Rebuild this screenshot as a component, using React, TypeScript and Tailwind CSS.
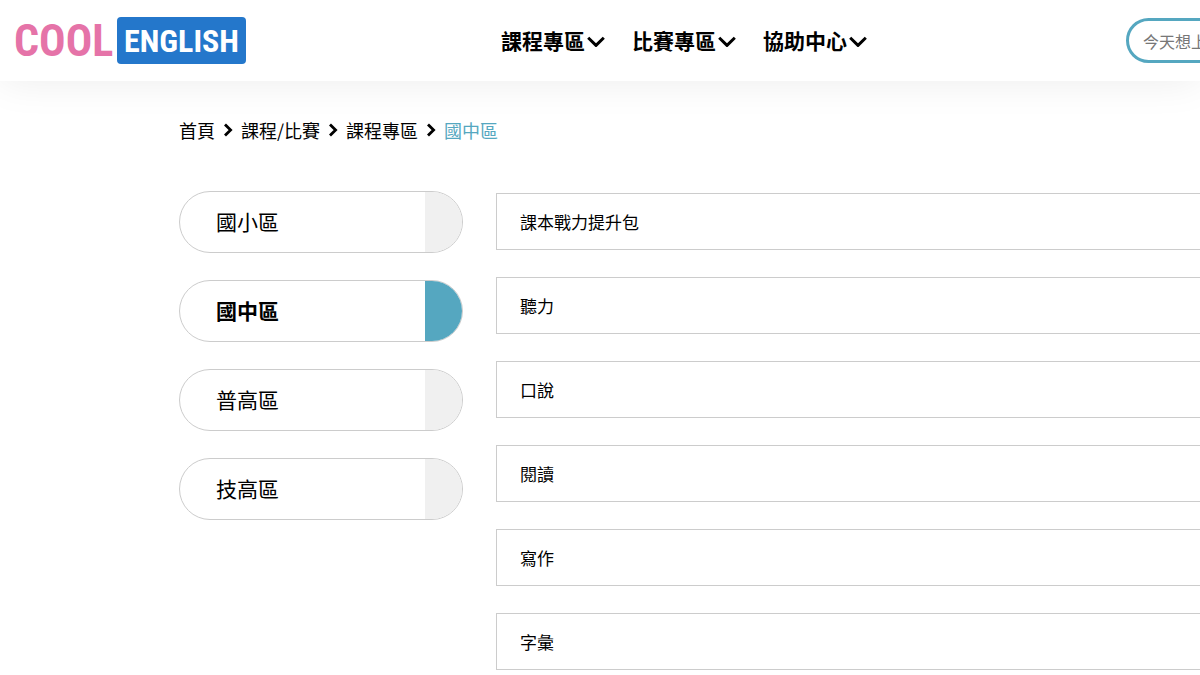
import { useState } from "react";

const NAV_ITEMS = ["課程專區", "比賽專區", "協助中心"];

const BREADCRUMBS = ["首頁", "課程/比賽", "課程專區"];

const STAGES = ["國小區", "國中區", "普高區", "技高區"];

const COURSES = ["課本戰力提升包", "聽力", "口說", "閱讀", "寫作", "字彙"];

const Logo = () => (
  <a
    href="#"
    aria-label="COOL ENGLISH"
    className="flex shrink-0 items-center gap-1 font-['Roboto_Condensed','Liberation_Sans_Narrow','Liberation_Sans',sans-serif] font-bold leading-none"
  >
    <span className="w-[99px] text-center text-[44px] text-[#e573a8]">COOL</span>
    <span className="flex h-[47px] w-[129px] items-center justify-center rounded bg-[#2477cb] text-[32px] text-white">
      ENGLISH
    </span>
  </a>
);

const ChevronDown = () => (
  <svg
    viewBox="0 0 18 12"
    className="h-3 w-[18px]"
    fill="none"
    stroke="currentColor"
    strokeWidth="3"
    strokeLinejoin="round"
    aria-hidden="true"
  >
    <path d="M1.2 2.8 9 10.4 16.8 2.8" />
  </svg>
);

const ChevronRight = () => (
  <svg
    viewBox="0 0 10 14"
    className="h-3.5 w-2.5"
    fill="none"
    stroke="currentColor"
    strokeWidth="2.8"
    aria-hidden="true"
  >
    <path d="M2 1.4 7.6 7 2 12.6" />
  </svg>
);

const Header = () => (
  <header className="flex h-[81px] items-center justify-between bg-white pl-3.5 shadow-[0_0_40px_rgba(0,0,0,0.08)]">
    <Logo />
    <nav className="flex gap-[27px] pr-1">
      {NAV_ITEMS.map((item) => (
        <button key={item} type="button" className="flex items-center gap-0.5 text-[21px] font-bold">
          {item}
          <ChevronDown />
        </button>
      ))}
    </nav>
    <div className="w-[74px] shrink-0 overflow-hidden">
      <input
        type="search"
        aria-label="搜尋"
        placeholder="今天想上什麼課"
        className="block h-[45px] w-60 rounded-full border-3 border-[#55a7c0] bg-white px-3.5 text-base placeholder:text-[#777777]"
      />
    </div>
  </header>
);

const Breadcrumb = () => (
  <nav aria-label="breadcrumb" className="flex items-center gap-2 text-lg leading-6">
    {BREADCRUMBS.map((item) => (
      <div key={item} className="flex items-center gap-2">
        <a href="#">{item}</a>
        <ChevronRight />
      </div>
    ))}
    <span className="text-[#55a7c0]">國中區</span>
  </nav>
);

export default function App() {
  const [stage, setStage] = useState("國中區");

  return (
    <div
      lang="zh-Hant"
      className="min-h-screen overflow-x-hidden bg-white font-['Noto_Sans_CJK_TC',sans-serif] text-black"
    >
      <Header />
      <main className="pl-[179px] pt-[37px]">
        <Breadcrumb />
        <div className="mt-[49px] flex gap-[33px]">
          <aside className="flex w-[284px] shrink-0 flex-col gap-[27px]">
            {STAGES.map((item) => (
              <button
                key={item}
                type="button"
                onClick={() => setStage(item)}
                className={`flex h-[62px] items-stretch justify-between overflow-hidden rounded-full border border-[#cccccc] bg-white pl-9 text-left text-[21px] ${
                  item === stage ? "font-bold" : ""
                }`}
              >
                <span className="self-center">{item}</span>
                <span className={`w-[37px] ${item === stage ? "bg-[#55a7c0]" : "bg-[#f0f0f0]"}`} />
              </button>
            ))}
          </aside>
          <section className="flex grow flex-col gap-[27px] pt-0.5">
            {COURSES.map((course) => (
              <a
                key={course}
                href="#"
                className="flex h-[57px] items-center border border-r-0 border-[#cccccc] pl-[23px] text-[17px]"
              >
                {course}
              </a>
            ))}
          </section>
        </div>
      </main>
    </div>
  );
}
